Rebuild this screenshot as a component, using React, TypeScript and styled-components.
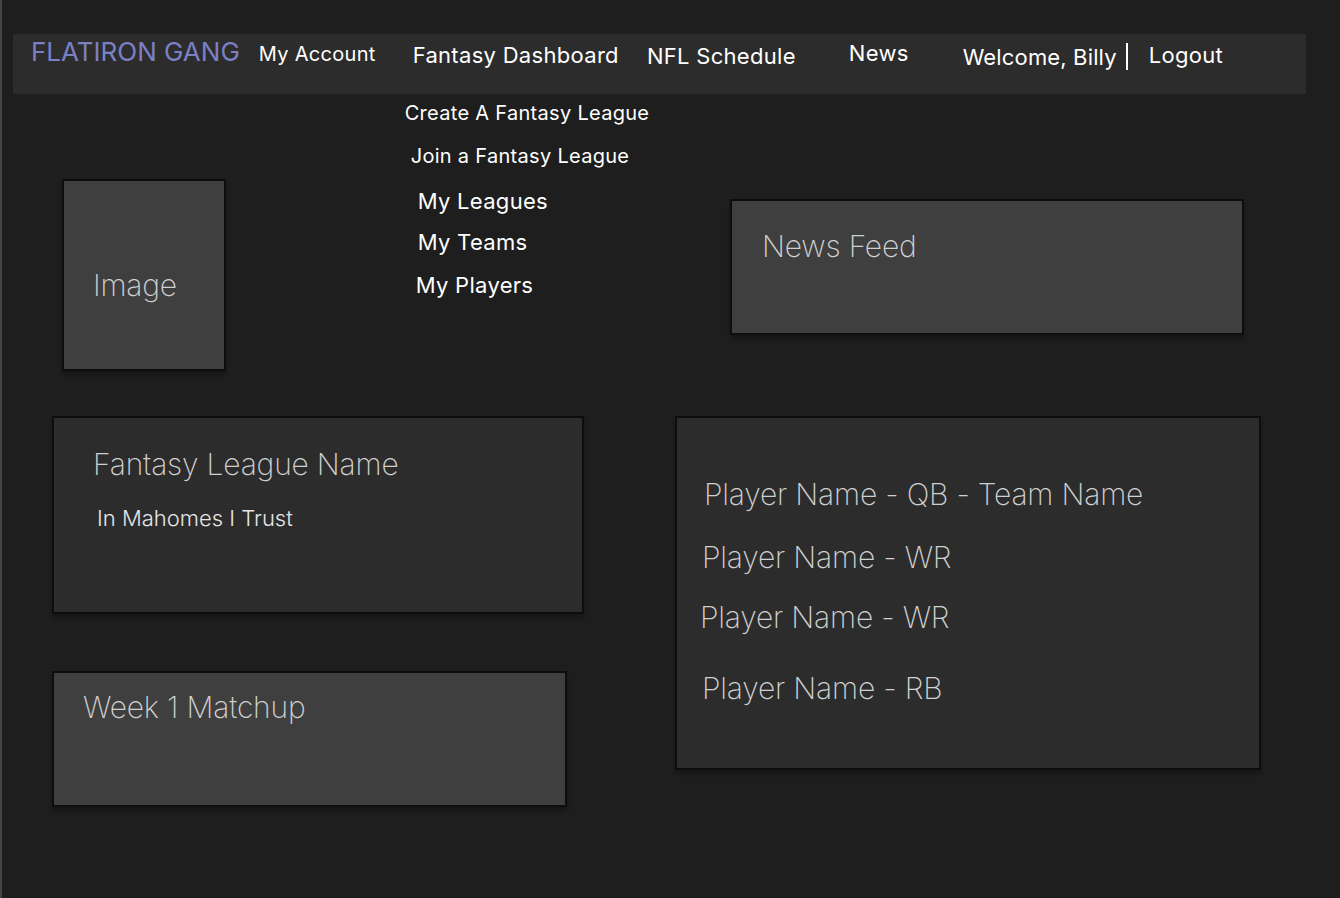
import React from "react";
import styled, { createGlobalStyle } from "styled-components";

const GlobalStyle = createGlobalStyle`
    * {
        box-sizing: border-box;
    }

    body {
        margin: 0;
        background-color: #1e1e1e;
        font-family: Inter, "Noto Sans", sans-serif;
    }
`;

const navLinks = [
    { label: "My Account", size: 20, gap: 19, dy: 8 },
    { label: "Fantasy Dashboard", size: 22, gap: 37, dy: 8, menu: true },
    { label: "NFL Schedule", size: 22, gap: 28, dy: 9 },
    { label: "News", size: 22, gap: 53, dy: 6 },
];

const menuItems = [
    { label: "Create A Fantasy League", size: 20, dx: 0, dy: 0 },
    { label: "Join a Fantasy League", size: 20, dx: 6, dy: 19 },
    { label: "My Leagues", size: 22, dx: 13, dy: 20 },
    { label: "My Teams", size: 22, dx: 13, dy: 15 },
    { label: "My Players", size: 22, dx: 11, dy: 17 },
];

const players = [
    { label: "Player Name - QB - Team Name", dx: 27, dy: 0 },
    { label: "Player Name - WR", dx: 25, dy: 27 },
    { label: "Player Name - WR", dx: 23, dy: 24 },
    { label: "Player Name - RB", dx: 25, dy: 35 },
];

const App = () => {
    return (
        <>
            <GlobalStyle />
            <Page>
                <NavBar>
                    <Brand>FLATIRON GANG</Brand>
                    {navLinks.map((link) => (
                        <NavItem
                            key={link.label}
                            $size={link.size}
                            $gap={link.gap}
                            $dy={link.dy}
                        >
                            {link.label}
                            {link.menu && (
                                <Dropdown>
                                    {menuItems.map((item) => (
                                        <MenuItem
                                            key={item.label}
                                            $size={item.size}
                                            $dx={item.dx}
                                            $dy={item.dy}
                                        >
                                            {item.label}
                                        </MenuItem>
                                    ))}
                                </Dropdown>
                            )}
                        </NavItem>
                    ))}
                    <NavItem $size={22} $gap={54} $dy={9} $tight>
                        Welcome, Billy
                        <Divider />
                    </NavItem>
                    <NavItem $size={22} $gap={21} $dy={8}>
                        Logout
                    </NavItem>
                </NavBar>

                <Main>
                    <LeftColumn>
                        <ImageBox>
                            <Title $dx={29} $dy={86}>
                                Image
                            </Title>
                        </ImageBox>
                        <LeagueCard>
                            <Title $dx={39} $dy={28}>
                                Fantasy League Name
                            </Title>
                            <SubTitle>In Mahomes I Trust</SubTitle>
                        </LeagueCard>
                        <MatchupCard>
                            <Title $dx={29} $dy={16}>
                                Week 1 Matchup
                            </Title>
                        </MatchupCard>
                    </LeftColumn>

                    <RightColumn>
                        <NewsBox>
                            <Title $dx={30} $dy={27}>
                                News Feed
                            </Title>
                        </NewsBox>
                        <RosterCard>
                            {players.map((p, i) => (
                                <Title key={i} $dx={p.dx} $dy={p.dy}>
                                    {p.label}
                                </Title>
                            ))}
                        </RosterCard>
                    </RightColumn>
                </Main>
            </Page>
        </>
    );
};

const Page = styled.div`
    min-height: 898px;
    background-color: #1e1e1e;
    border-left: 2px solid #444444;
    padding-top: 34px;
`;

const NavBar = styled.nav`
    margin-left: 11px;
    width: 1293px;
    height: 60px;
    background-color: #2c2c2c;
    display: flex;
    align-items: flex-start;
    padding-left: 18px;
`;

const Brand = styled.div`
    margin-top: 2px;
    font-size: 26px;
    font-weight: 400;
    color: #7b80c4;
    white-space: nowrap;
`;

const NavItem = styled.div<{
    $size: number;
    $gap: number;
    $dy: number;
    $tight?: boolean;
}>`
    position: relative;
    display: flex;
    align-items: center;
    margin-left: ${({ $gap }) => $gap}px;
    margin-top: ${({ $dy }) => $dy}px;
    font-size: ${({ $size }) => $size}px;
    letter-spacing: ${({ $tight }) => ($tight ? "0.15px" : "0.3px")};
    color: #ffffff;
    white-space: nowrap;
    cursor: pointer;
`;

const Divider = styled.span`
    display: inline-block;
    width: 2px;
    height: 27px;
    margin-left: 9px;
    background-color: #ffffff;
`;

const Dropdown = styled.div`
    position: absolute;
    top: 59px;
    left: -8px;
    display: flex;
    flex-direction: column;
    align-items: flex-start;
`;

const MenuItem = styled.div<{ $size: number; $dx: number; $dy: number }>`
    margin-left: ${({ $dx }) => $dx}px;
    margin-top: ${({ $dy }) => $dy}px;
    font-size: ${({ $size }) => $size}px;
    letter-spacing: 0.3px;
    color: #ffffff;
    white-space: nowrap;
`;

const Main = styled.main`
    display: flex;
    padding-left: 50px;
`;

const LeftColumn = styled.div`
    width: 623px;
    display: flex;
    flex-direction: column;
    align-items: flex-start;
`;

const RightColumn = styled.div`
    display: flex;
    flex-direction: column;
    align-items: flex-start;
`;

const Panel = styled.div<{ $light?: boolean }>`
    display: flex;
    flex-direction: column;
    align-items: flex-start;
    border: 2px solid #0d0d0d;
    background-color: ${({ $light }) => ($light ? "#3f3f3f" : "#2c2c2c")};
    box-shadow: 0 4px 4px rgba(0, 0, 0, 0.25);
`;

const ImageBox = styled(Panel).attrs({ $light: true })`
    width: 164px;
    height: 192px;
    margin-left: 10px;
    margin-top: 85px;
`;

const LeagueCard = styled(Panel)`
    width: 532px;
    height: 198px;
    margin-top: 45px;
`;

const MatchupCard = styled(Panel).attrs({ $light: true })`
    width: 515px;
    height: 136px;
    margin-top: 57px;
`;

const NewsBox = styled(Panel).attrs({ $light: true })`
    width: 514px;
    height: 136px;
    margin-left: 55px;
    margin-top: 105px;
`;

const RosterCard = styled(Panel)`
    width: 586px;
    height: 354px;
    margin-top: 81px;
    padding-top: 58px;
`;

const Title = styled.div<{ $dx: number; $dy: number }>`
    margin-left: ${({ $dx }) => $dx}px;
    margin-top: ${({ $dy }) => $dy}px;
    font-size: 30px;
    font-weight: 200;
    letter-spacing: -0.2px;
    color: #d0d0d0;
    white-space: nowrap;
`;

const SubTitle = styled.div`
    margin-left: 43px;
    margin-top: 23px;
    font-size: 22px;
    font-weight: 300;
    color: #e6e6e6;
    white-space: nowrap;
`;

export default App;
